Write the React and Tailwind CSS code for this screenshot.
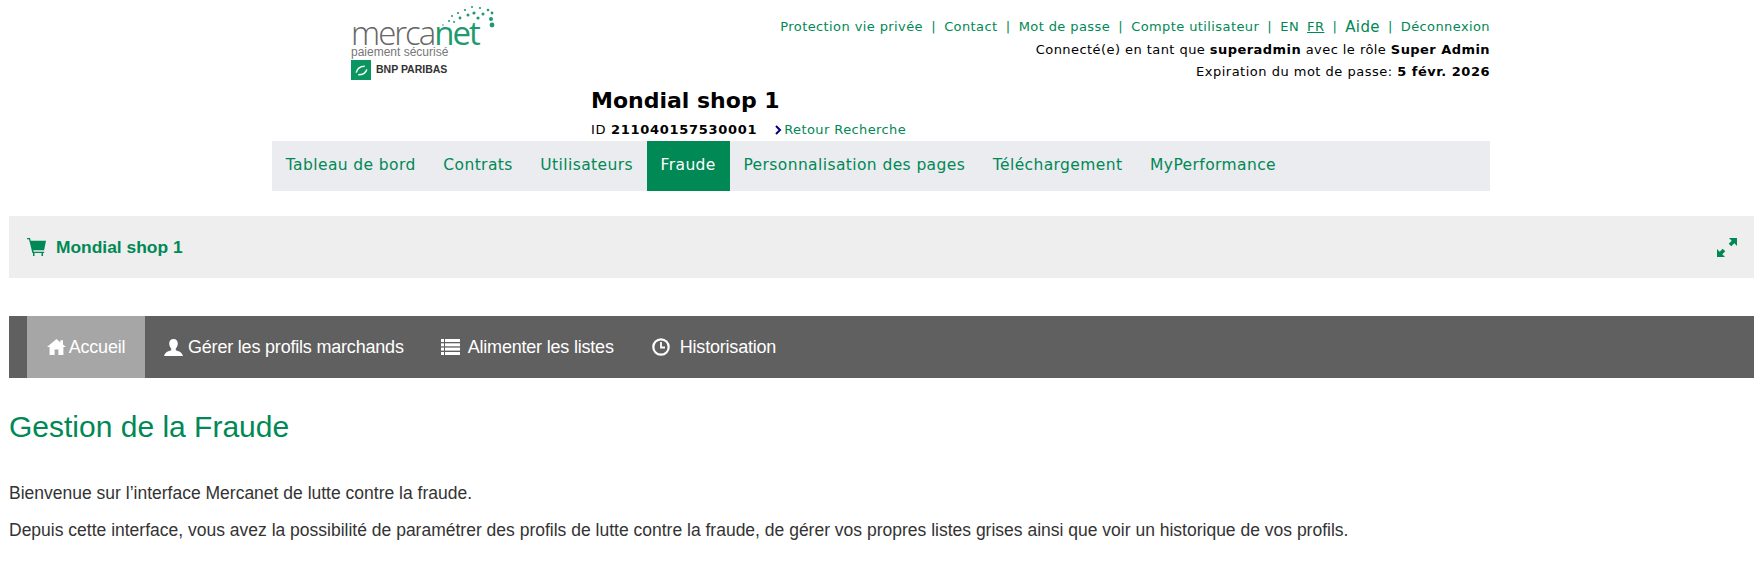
const green = 'text-[#008855]';

const Logo = () => (
  <div className="flex w-[150px] flex-col">
    <div className="relative h-[44px]">
      <svg className="absolute left-[58px] top-[2px]" width="90" height="26" viewBox="0 0 90 26" fill="#1f9a6c">
        <circle cx="34" cy="20" r="0.8" /><circle cx="40" cy="16" r="1" /><circle cx="45" cy="17" r="1" /><circle cx="43" cy="11" r="1" />
        <circle cx="49" cy="8" r="1.1" /><circle cx="51" cy="13" r="1.4" /><circle cx="56" cy="5" r="1.1" /><circle cx="59" cy="10" r="1.5" />
        <circle cx="63" cy="2" r="1" /><circle cx="65" cy="8" r="1.6" /><circle cx="71" cy="3" r="1.1" /><circle cx="69" cy="13" r="1.6" />
        <circle cx="79" cy="5" r="1.3" /><circle cx="74" cy="9" r="1.5" /><circle cx="83" cy="8" r="1.4" /><circle cx="82" cy="14" r="2" />
        <circle cx="83" cy="20" r="2.4" />
      </svg>
      <p className="absolute left-0 top-[15px] font-['Open_Sans',sans-serif] text-[33px] leading-[29px] font-light tracking-[-2px] text-[#666666]">
        merca<span className="font-normal text-[#1f9a6c]">net</span>
      </p>
    </div>
    <p className="font-['Liberation_Sans',sans-serif] text-[12px] leading-[10px] text-[#777777]">paiement sécurisé</p>
    <div className="mt-[3px] flex items-center gap-[5px]">
      <div className="flex h-[20px] w-[20px] items-center justify-center bg-[#0b9560]">
        <svg width="15" height="15" viewBox="0 0 14 14" fill="none" stroke="#ffffff" strokeWidth="1.4">
          <path d="M2 9c1-4 4-6 8-6" /><path d="M12 6c-1 3-4 5-8 5" />
        </svg>
      </div>
      <span className="font-['Liberation_Sans',sans-serif] text-[10.500px] font-bold text-[#333333]">BNP PARIBAS</span>
    </div>
  </div>
);

const HomeIcon = () => (
  <svg width="19" height="16" viewBox="0 0 19 16" fill="#ffffff"><path d="M9.5 0 0 8h2.6v8h5V10.600h3.800V16h5V8H19l-3-2.500V1.200h-2.600v2.200z" /></svg>
);

const UserIcon = () => (
  <svg width="19" height="17" viewBox="0 0 19 17" fill="#ffffff"><path d="M9.500 0c2.700 0 4.300 2 4.300 4.600 0 2-.9 3.800-2 4.800v1.800c2 .8 6.200 1.600 7.200 5.800H0c1-4.200 5.200-5 7.200-5.800V9.400c-1.100-1-2-2.800-2-4.800C5.200 2 6.800 0 9.500 0z" /></svg>
);

const ListIcon = () => (
  <svg width="19" height="16" viewBox="0 0 19 16" fill="#ffffff">
    <rect y="0" width="3" height="3" /><rect x="4" y="0" width="15" height="3" />
    <rect y="4.300" width="3" height="3" /><rect x="4" y="4.300" width="15" height="3" />
    <rect y="8.600" width="3" height="3" /><rect x="4" y="8.600" width="15" height="3" />
    <rect y="13" width="3" height="3" /><rect x="4" y="13" width="15" height="3" />
  </svg>
);

const ClockIcon = () => (
  <svg width="18" height="18" viewBox="0 0 18 18" fill="none" stroke="#ffffff"><circle cx="9" cy="9" r="7.700" strokeWidth="2.200" /><path d="M9 4v5.500h4" strokeWidth="1.800" /></svg>
);

const CartIcon = () => (
  <svg width="19" height="18" viewBox="0 0 19 18" fill="#008855">
    <path d="M0 0h3l.7 2.800H19l-1.900 9.400H6.300l.3 1.500h10.600V15H5.400L2 1.300H0z" />
    <rect x="6" y="15" width="1.500" height="3" /><rect x="14.500" y="15" width="1.500" height="3" />
  </svg>
);

const ExpandIcon = () => (
  <svg width="20" height="19" viewBox="0 0 20 19" fill="#008855">
    <path d="M12 0h8v8l-2.700-2.700-3 3-2.600-2.600 3-3z" /><path d="M0 11l2.700 2.700 3-3 2.600 2.600-3 3L8 19H0z" />
  </svg>
);

const topLinks = ['Protection vie privée', 'Contact', 'Mot de passe', 'Compte utilisateur'];
const menu = ['Tableau de bord', 'Contrats', 'Utilisateurs', 'Fraude', 'Personnalisation des pages', 'Téléchargement', 'MyPerformance'];

export default function App() {
  return (
    <div className="min-h-[563px] overflow-hidden bg-white font-['Liberation_Sans',sans-serif]">
      <header className="ml-[272px] w-[1218px] font-['DejaVu_Sans',sans-serif]">
        <div className="flex justify-between">
          <div className="pl-[79px] pt-[3px]"><Logo /></div>
          <div className="pt-[16px] text-right text-[13px] leading-[22.500px] tracking-[0.5px] text-black">
            <div className={`flex justify-end tracking-[0.4px] ${green}`}>
              {topLinks.map((l) => (
                <span key={l}>{l}<span className="mx-[8.200px]">|</span></span>
              ))}
              <span>EN</span>
              <span className="ml-[8px] underline">FR</span>
              <span className="mx-[8px]">|</span>
              <span className="text-[15px]">Aide</span>
              <span className="mx-[8px]">|</span>
              <span>Déconnexion</span>
            </div>
            <p className="tracking-[0.44px]">Connecté(e) en tant que <b>superadmin</b> avec le rôle <b>Super Admin</b></p>
            <p>Expiration du mot de passe: <b>5 févr. 2026</b></p>
          </div>
        </div>
        <div className="pb-[1px] pl-[319px]">
          <h2 className="mt-[2.500px] text-[22px] leading-[30px] font-bold text-black">Mondial shop 1</h2>
          <p className="mt-[4px] flex text-[13px] leading-[20px] tracking-[0.7px] text-black">
            <span>ID <b>211040157530001</b></span>
            <span className={`ml-[18px] flex items-center tracking-[0.4px] ${green}`}>
              <svg className="mr-[2px]" width="7" height="10" viewBox="0 0 7 10" fill="none" stroke="#000080" strokeWidth="2"><path d="M1 1l4 4-4 4" /></svg>
              Retour Recherche
            </span>
          </p>
        </div>
        <nav className="flex h-[50px] bg-[#ebecf0] text-[15.500px] tracking-[0.4px]">
          {menu.map((m) => (
            <a key={m} className={`flex items-center px-[13.800px] ${m === 'Fraude' ? 'bg-[#008855] text-white' : green}`}>{m}</a>
          ))}
        </nav>
      </header>

      <section className="mt-[25px] mr-[6px] ml-[9px] flex h-[62px] items-center justify-between bg-[#eeeeee] pr-[17px] pl-[18px]">
        <div className="flex items-center gap-[10px]">
          <CartIcon />
          <span className={`text-[17.400px] font-bold ${green}`}>Mondial shop 1</span>
        </div>
        <ExpandIcon />
      </section>

      <nav className="mt-[38px] mr-[6px] ml-[9px] flex h-[62px] bg-[#606060] pl-[18px] text-[18px] tracking-[-0.2px] text-white">
        <a className="flex w-[118px] items-center justify-center gap-[3px] bg-[#a6a6a6]"><HomeIcon />Accueil</a>
        <a className="ml-[19px] flex items-center gap-[5px]"><UserIcon />Gérer les profils marchands</a>
        <a className="ml-[37px] flex items-center gap-[8px]"><ListIcon />Alimenter les listes</a>
        <a className="ml-[38px] flex items-center gap-[10px]"><ClockIcon />Historisation</a>
      </nav>

      <main className="mx-[9px] text-[#333333]">
        <h1 className={`mt-[32px] text-[30px] leading-[33px] ${green}`}>Gestion de la Fraude</h1>
        <p className="mt-[39px] text-[17.500px] leading-[22px]">Bienvenue sur l’interface Mercanet de lutte contre la fraude.</p>
        <p className="mt-[15px] text-[17.500px] leading-[22px]">Depuis cette interface, vous avez la possibilité de paramétrer des profils de lutte contre la fraude, de gérer vos propres listes grises ainsi que voir un historique de vos profils.</p>
      </main>
    </div>
  );
}
